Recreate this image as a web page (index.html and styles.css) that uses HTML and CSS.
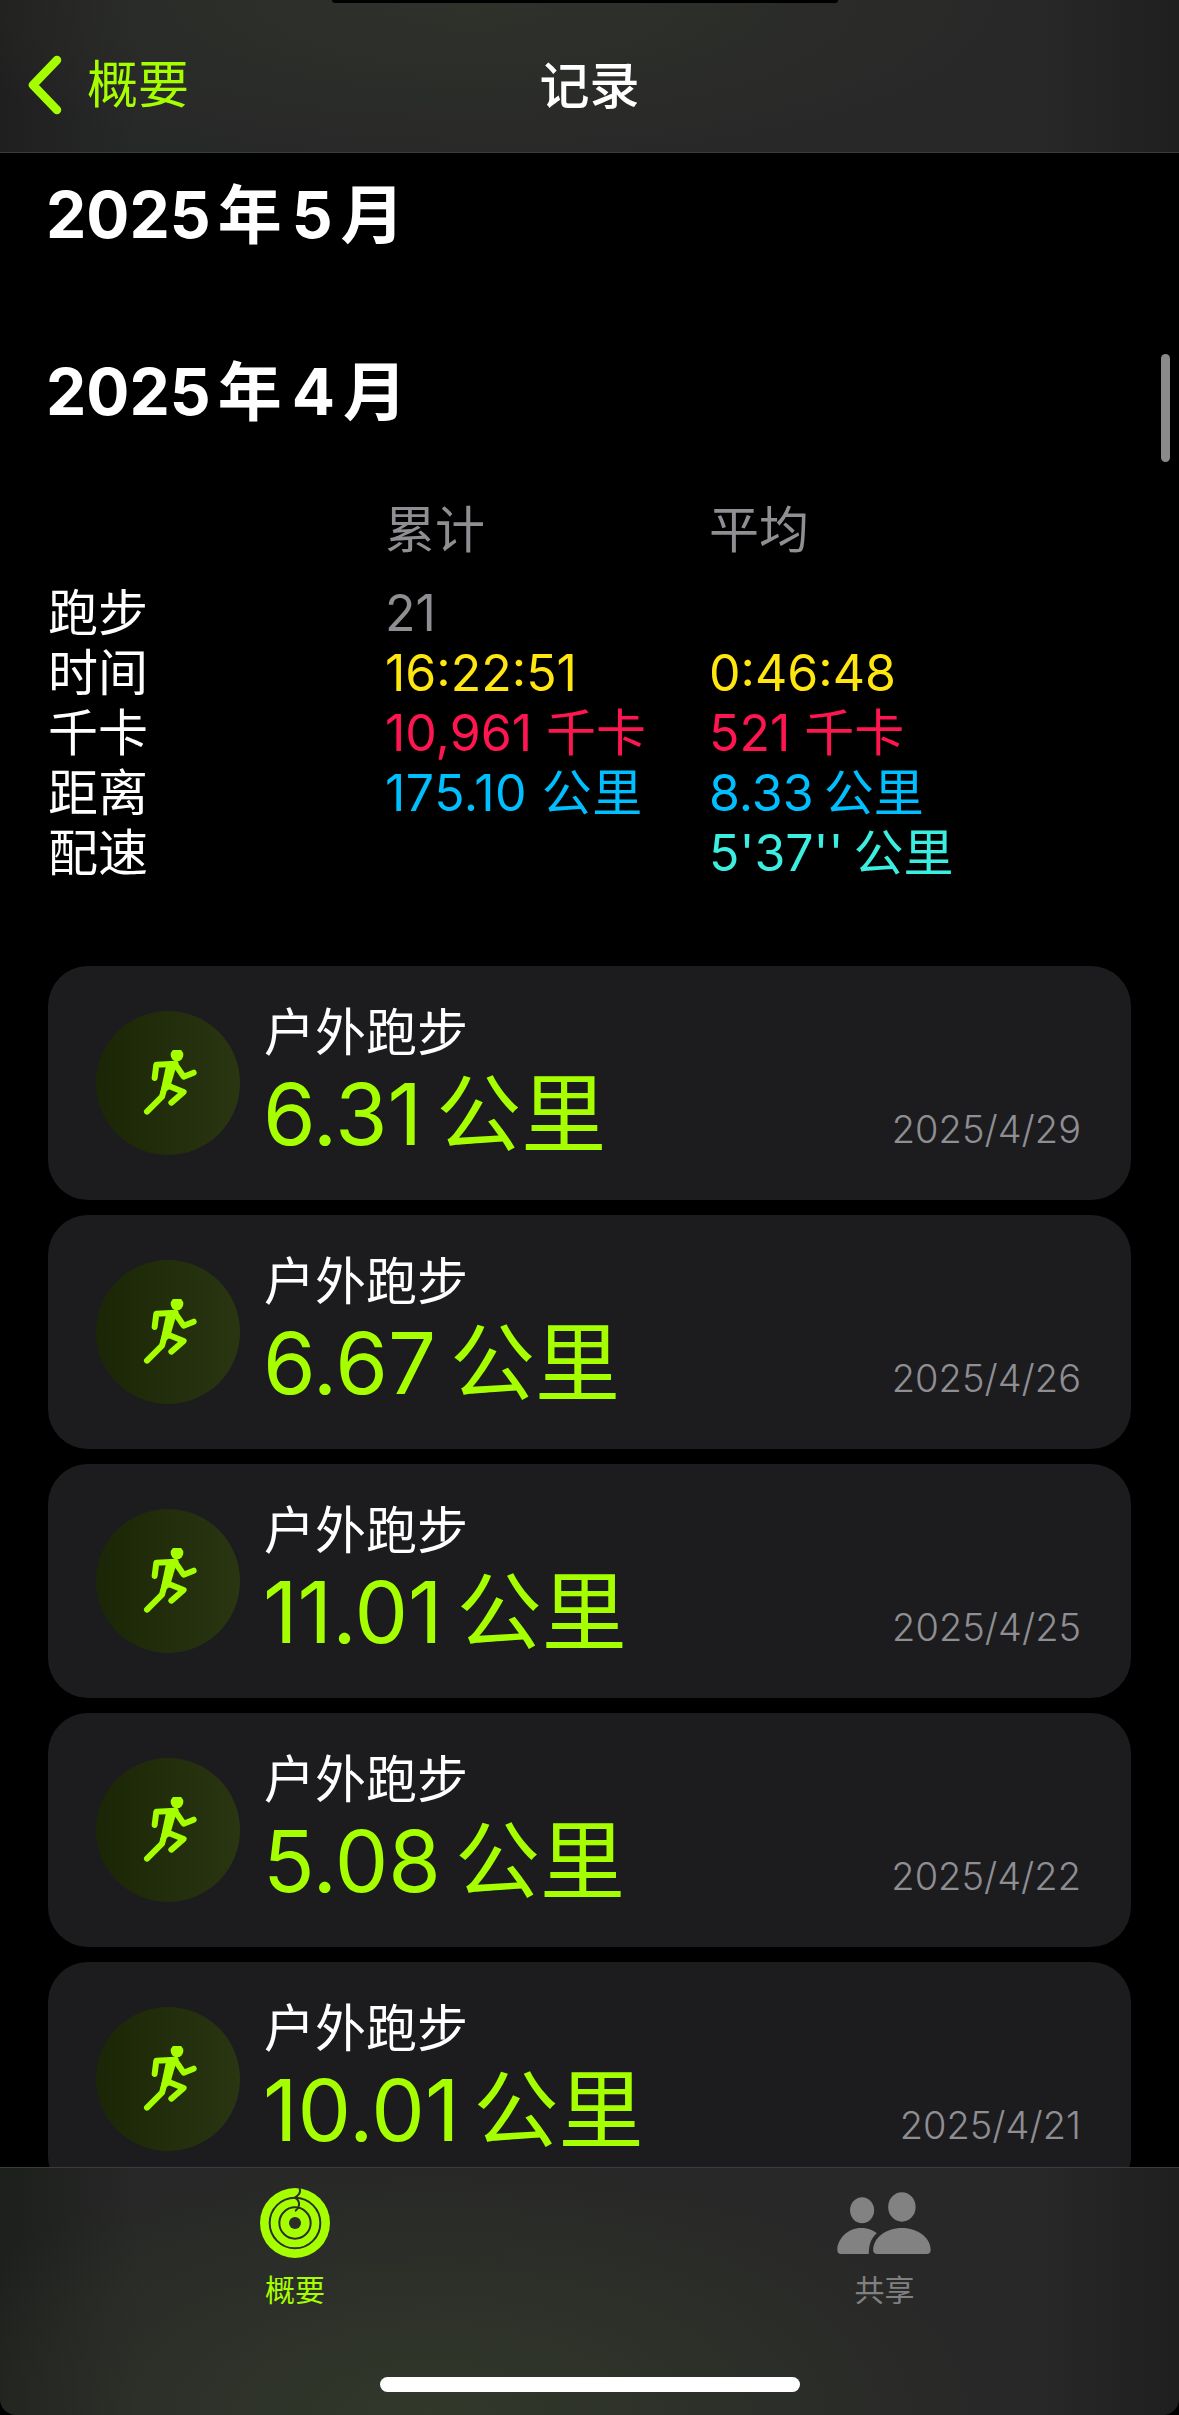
FILE: index.html
```html
<!DOCTYPE html>
<html lang="zh-CN">
<head>
<meta charset="utf-8">
<title>记录</title>
<link rel="stylesheet" href="styles.css">
</head>
<body>
<div class="app">
  <header class="nav">
    <div class="notch"></div>
    <a class="back">
      <svg class="chev" viewBox="0 0 36 60"><path d="M30 5 6 30l24 25" /></svg>
      <span>概要</span>
    </a>
    <h1 class="title">记录</h1>
  </header>
  <main class="content">
    <div class="scrollbar"></div>
    <h2 class="month first">2025<span class="cjk">年</span>5<span class="cjk-end">月</span></h2>
    <h2 class="month second">2025<span class="cjk">年</span>4<span class="cjk-end">月</span></h2>
    <section class="stats">
      <span></span><span class="gray">累计</span><span class="gray">平均</span>
      <span>跑步</span><span class="gray">21</span><span></span>
      <span>时间</span><span class="yellow">16:22:51</span><span class="yellow">0:46:48</span>
      <span>千卡</span><span class="red">10,961 千卡</span><span class="red">521 千卡</span>
      <span>距离</span><span class="blue wide">175.10 公里</span><span class="blue">8.33 公里</span>
      <span>配速</span><span></span><span class="teal">5'37'' 公里</span>
    </section>
    <section class="cards">
      <article class="card">
        <div class="badge"><svg class="runner" viewBox="164 150 200 200"><circle class="r-head" cx="290" cy="165" r="19"/><path class="r-limb" d="M223 234l5-40 58-3M272 195l-27 95-45 45M288 198l22 32 30-12M258 255l52 21-37 32"/><path class="r-torso" d="M258 192h32l-22 75-30 20z"/></svg></div>
        <div class="info"><div class="kind">户外跑步</div><div class="dist">6.31<span class="unit">公里</span></div></div>
        <time class="date">2025/4/29</time>
      </article>
      <article class="card">
        <div class="badge"><svg class="runner" viewBox="164 150 200 200"><circle class="r-head" cx="290" cy="165" r="19"/><path class="r-limb" d="M223 234l5-40 58-3M272 195l-27 95-45 45M288 198l22 32 30-12M258 255l52 21-37 32"/><path class="r-torso" d="M258 192h32l-22 75-30 20z"/></svg></div>
        <div class="info"><div class="kind">户外跑步</div><div class="dist">6.67<span class="unit">公里</span></div></div>
        <time class="date">2025/4/26</time>
      </article>
      <article class="card">
        <div class="badge"><svg class="runner" viewBox="164 150 200 200"><circle class="r-head" cx="290" cy="165" r="19"/><path class="r-limb" d="M223 234l5-40 58-3M272 195l-27 95-45 45M288 198l22 32 30-12M258 255l52 21-37 32"/><path class="r-torso" d="M258 192h32l-22 75-30 20z"/></svg></div>
        <div class="info"><div class="kind">户外跑步</div><div class="dist">11.01<span class="unit">公里</span></div></div>
        <time class="date">2025/4/25</time>
      </article>
      <article class="card">
        <div class="badge"><svg class="runner" viewBox="164 150 200 200"><circle class="r-head" cx="290" cy="165" r="19"/><path class="r-limb" d="M223 234l5-40 58-3M272 195l-27 95-45 45M288 198l22 32 30-12M258 255l52 21-37 32"/><path class="r-torso" d="M258 192h32l-22 75-30 20z"/></svg></div>
        <div class="info"><div class="kind">户外跑步</div><div class="dist">5.08<span class="unit">公里</span></div></div>
        <time class="date">2025/4/22</time>
      </article>
      <article class="card">
        <div class="badge"><svg class="runner" viewBox="164 150 200 200"><circle class="r-head" cx="290" cy="165" r="19"/><path class="r-limb" d="M223 234l5-40 58-3M272 195l-27 95-45 45M288 198l22 32 30-12M258 255l52 21-37 32"/><path class="r-torso" d="M258 192h32l-22 75-30 20z"/></svg></div>
        <div class="info"><div class="kind">户外跑步</div><div class="dist">10.01<span class="unit">公里</span></div></div>
        <time class="date">2025/4/21</time>
      </article>
    </section>
  </main>
  <footer class="tabbar">
    <div class="tabs">
      <div class="tab active">
        <svg class="tab-icon" viewBox="0 0 210 210">
          <circle class="ring-fill" cx="105" cy="105" r="105"/>
          <circle class="ring-gap" cx="105" cy="105" r="76"/>
          <circle class="ring-gap" cx="105" cy="105" r="47"/>
          <circle class="ring-hole" cx="105" cy="105" r="18"/>
          <path class="ring-gap" d="M118 0c6 12-2 22-13 29 9 6 16 15 10 29-4 8-8 10-10 11"/>
        </svg>
        <span>概要</span>
      </div>
      <div class="tab">
        <svg class="tab-icon people" viewBox="50 60 290 190">
          <ellipse class="person" cx="128" cy="117" rx="36" ry="39"/>
          <ellipse class="person" cx="247" cy="107" rx="41" ry="44"/>
          <path class="person" d="M66 248c-8 0-12-4-12-12 0-34 32-66 71-66 17 0 35 5 47 16-14 12-24 30-24 62z"/>
          <path class="person" d="M174 248c-9 0-13-5-13-12 0-36 38-66 86-66s86 30 86 66c0 7-4 12-13 12z"/>
        </svg>
        <span>共享</span>
      </div>
    </div>
    <div class="home"></div>
  </footer>
</div>
</body>
</html>
```

FILE: styles.css
```css
* { box-sizing: border-box; }
html, body { margin: 0; background: #000; }
body {
  font-family: Inter, "Noto Sans CJK SC", sans-serif;
  color: #fff;
}
.app {
  width: 1179px;
  height: 2415px;
  display: flex;
  flex-direction: column;
  overflow: hidden;
  background: #000;
}
.nav {
  position: relative;
  flex: 0 0 153px;
  display: flex;
  align-items: center;
  justify-content: center;
  padding-top: 20px;
  border-bottom: 1px solid #3a3b3b;
  background: radial-gradient(ellipse 560px 170px at 470px 0, #2f322b 0%, rgba(47,50,43,0) 100%),
    linear-gradient(90deg, #1f1f1f 0%, #272828 12%, #282828 88%, #1f1f1f 100%);
}
.notch {
  position: absolute;
  top: 0;
  left: 332px;
  width: 506px;
  height: 3px;
  background: #000;
  border-radius: 0 0 8px 8px;
}
.back {
  position: absolute;
  left: 27px;
  top: 50%;
  display: flex;
  align-items: center;
  gap: 24px;
  margin-top: -21px;
  color: #a6ff00;
  font-size: 51px;
  line-height: 60px;
}
.chev { width: 36px; height: 60px; }
.chev path {
  fill: none;
  stroke: #a6ff00;
  stroke-width: 8.5;
  stroke-linecap: round;
  stroke-linejoin: round;
}
.title {
  margin: 0;
  font-size: 50px;
  font-weight: 500;
  line-height: 60px;
}
.content {
  position: relative;
  flex: 1;
  min-height: 0;
  overflow: hidden;
  padding: 22px 46px 0;
}
.scrollbar {
  position: absolute;
  top: 201px;
  right: 9px;
  width: 9px;
  height: 108px;
  border-radius: 5px;
  background: #8a8a8a;
}
.month {
  margin: 0;
  font-size: 64px;
  font-weight: 700;
  line-height: 80px;
  height: 80px;
}
.month .cjk { margin: 0 10px 0 7px; }
.month .cjk-end { margin-left: 8px; }
.month.second { margin-top: 97px; }
.stats {
  display: grid;
  grid-template-columns: 337px 324px 1fr;
  grid-template-rows: 83px;
  grid-auto-rows: 60px;
  margin: 68px 0 0 2px;
  font-size: 50px;
  font-weight: 400;
  line-height: 60px;
}
.gray { color: #8e8e93; }
.yellow { color: #ffe60f; }
.red { color: #ff1650; }
.blue { color: #00bfff; word-spacing: -4px; }
.blue.wide { letter-spacing: 0.5px; word-spacing: 0; }
.teal { color: #3ceee0; word-spacing: -4px; }
.cards {
  display: flex;
  flex-direction: column;
  gap: 15px;
  margin: 83px 2px 0;
}
.card {
  flex: 0 0 234px;
  display: flex;
  align-items: flex-start;
  padding: 45px 50px 0 48px;
  background: #1c1c1e;
  border-radius: 40px;
}
.badge {
  flex: 0 0 144px;
  height: 144px;
  display: flex;
  align-items: center;
  justify-content: center;
  border-radius: 50%;
  background: linear-gradient(90deg, #1a2605, #2a3512);
}
.runner { width: 66.67px; height: 66.67px; }
.r-head, .r-torso { fill: #a6ff00; }
.r-limb {
  fill: none;
  stroke: #a6ff00;
  stroke-width: 18;
  stroke-linecap: round;
  stroke-linejoin: round;
}
.info {
  flex: 1;
  margin: -8px 0 0 23px;
}
.kind {
  margin-left: 1px;
  font-size: 51px;
  font-weight: 400;
  line-height: 60px;
}
.dist {
  margin-top: 2px;
  color: #a6ff00;
  font-size: 85px;
  font-weight: 400;
  line-height: 100px;
}
.unit { margin-left: 14px; }
.date {
  align-self: flex-end;
  margin-bottom: 47px;
  color: #8e8e93;
  font-size: 38px;
  font-weight: 300;
  line-height: 48px;
}
.tabbar {
  flex: 0 0 248px;
  display: flex;
  flex-direction: column;
  border-top: 1px solid #3a3b3b;
  border-radius: 0 0 16px 16px;
  background: radial-gradient(ellipse 560px 260px at 430px 248px, #32382a 0%, rgba(50,56,42,0) 100%),
    linear-gradient(90deg, #1d1f1d 0%, #272827 12%, #282828 88%, #1f1f1f 100%);
}
.tabs {
  flex: 1;
  display: grid;
  grid-template-columns: 590px 589px;
  padding-top: 20px;
}
.tab {
  display: flex;
  flex-direction: column;
  align-items: center;
  color: #808080;
  font-size: 30px;
  line-height: 36px;
}
.tab.active { color: #a6ff00; }
.tab-icon { width: 70px; height: 70px; margin-bottom: 14px; }
.people { width: 97px; }
.ring-fill { fill: #a6ff00; }
.ring-gap { fill: none; stroke: #2c2f29; stroke-width: 6; }
.ring-hole { fill: #2c2f29; }
.person { fill: #828282; }
.home {
  width: 420px;
  height: 15px;
  margin: 0 auto 23px;
  border-radius: 8px;
  background: #fff;
}
```
